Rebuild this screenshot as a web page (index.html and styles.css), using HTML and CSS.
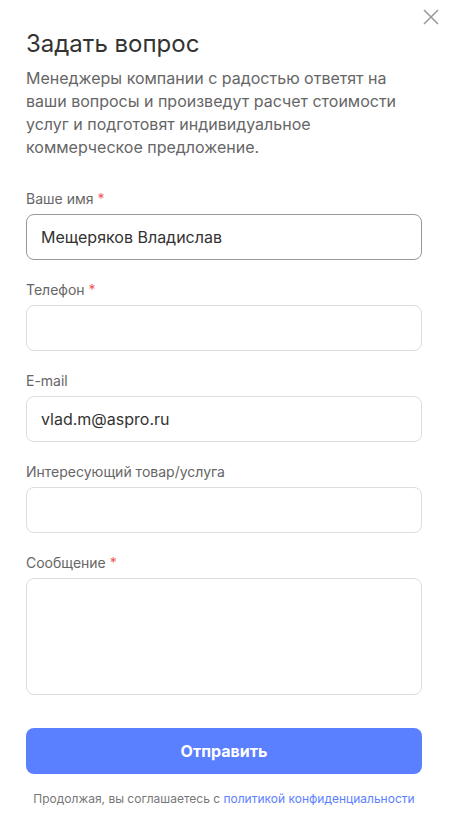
FILE: index.html
```html
<!DOCTYPE html>
<html lang="ru">
<head>
  <meta charset="UTF-8">
  <meta name="viewport" content="width=device-width, initial-scale=1.0">
  <title>Задать вопрос</title>
  <link rel="stylesheet" href="styles.css">
</head>
<body>
  <div class="popup">
    <button class="close-button" aria-label="Закрыть">
      <svg width="16" height="16" viewBox="0 0 16 16"><path d="M1 1L15 15M15 1L1 15" stroke="#999" stroke-width="1.5" fill="none"/></svg>
    </button>

    <h1 class="popup-title">Задать вопрос</h1>
    <p class="popup-desc">Менеджеры компании с радостью ответят на ваши вопросы и произведут расчет стоимости услуг и подготовят индивидуальное коммерческое предложение.</p>

    <form class="form">
      <div class="form-row">
        <label class="form-label">Ваше имя <span class="req">*</span></label>
        <input class="form-input focused" type="text" value="Мещеряков Владислав">
      </div>
      <div class="form-row">
        <label class="form-label">Телефон <span class="req">*</span></label>
        <input class="form-input" type="text">
      </div>
      <div class="form-row">
        <label class="form-label">E-mail</label>
        <input class="form-input" type="text" value="vlad.m@aspro.ru">
      </div>
      <div class="form-row">
        <label class="form-label">Интересующий товар/услуга</label>
        <input class="form-input" type="text">
      </div>
      <div class="form-row form-row-last">
        <label class="form-label">Сообщение <span class="req">*</span></label>
        <textarea class="form-input form-textarea"></textarea>
      </div>

      <button class="submit-button" type="button">Отправить</button>
      <div class="licence">Продолжая, вы соглашаетесь с <a href="#">политикой конфиденциальности</a></div>
    </form>
  </div>
</body>
</html>
```

FILE: styles.css
```css
* {
  margin: 0;
  padding: 0;
  box-sizing: border-box;
}

body {
  font-family: Inter, "Noto Sans", sans-serif;
  background: #fff;
  color: #333;
}

.popup {
  position: relative;
  padding: 29px 29px 30px 26px;
}

.close-button {
  position: absolute;
  top: 9px;
  right: 12px;
  width: 16px;
  height: 16px;
  background: none;
  border: none;
  cursor: pointer;
  display: flex;
}

.popup-title {
  font-size: 24px;
  line-height: 30px;
  font-weight: 400;
  color: #333;
}

.popup-desc {
  margin-top: 8px;
  font-size: 16px;
  line-height: 23px;
  color: #666;
}

.form {
  margin-top: 32px;
}

.form-row {
  display: flex;
  flex-direction: column;
  margin-bottom: 22px;
}

.form-label {
  font-size: 14px;
  line-height: 16px;
  color: #666;
  margin-bottom: 7px;
}

.req {
  color: #f05a5a;
}

.form-input {
  width: 100%;
  height: 46px;
  border: 1px solid #ddd;
  border-radius: 8px;
  padding: 0 14px;
  font-family: inherit;
  font-size: 16px;
  color: #333;
  background: #fff;
  outline: none;
}

.form-input.focused {
  border-color: #999;
}

.form-textarea {
  height: 117px;
  resize: none;
  padding-top: 12px;
}

.form-row-last {
  margin-bottom: 33px;
}

.submit-button {
  display: block;
  width: 100%;
  height: 46px;
  border: none;
  border-radius: 8px;
  background: #5b80ff;
  color: #fff;
  font-family: inherit;
  font-size: 16px;
  font-weight: 700;
  cursor: pointer;
}

.licence {
  margin-top: 17px;
  text-align: center;
  font-size: 12px;
  line-height: 16px;
  color: #777;
}

.licence a {
  color: #5b80ff;
  text-decoration: none;
}
```
